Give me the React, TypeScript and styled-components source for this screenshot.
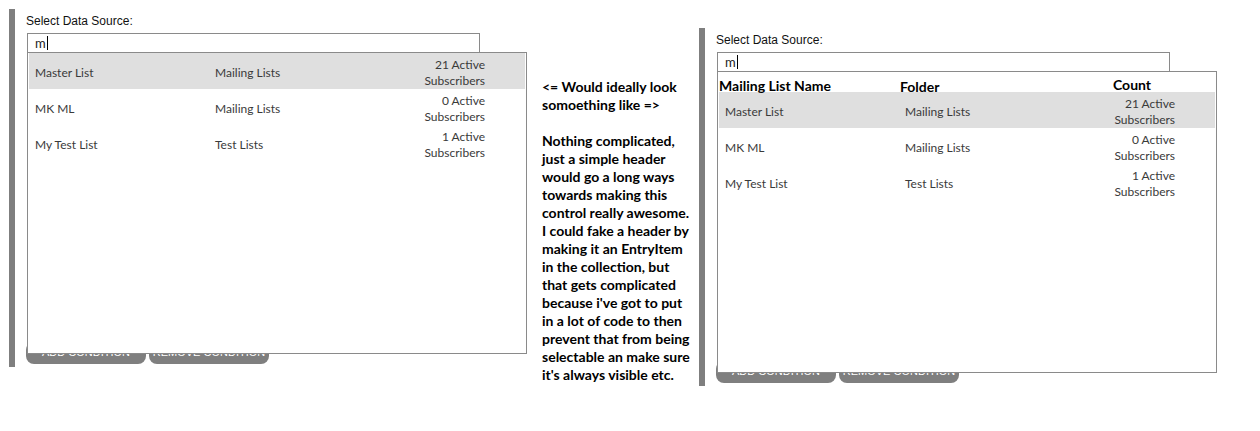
import React from "react";
import styled, { createGlobalStyle } from "styled-components";

const GlobalStyle = createGlobalStyle`
  html, body {
    margin: 0;
    padding: 0;
    background: #fff;
  }
  body {
    font-family: "Liberation Sans", Arial, sans-serif;
  }
`;

type ListItem = {
  name: string;
  folder: string;
  count: number;
};

const items: ListItem[] = [
  { name: "Master List", folder: "Mailing Lists", count: 21 },
  { name: "MK ML", folder: "Mailing Lists", count: 0 },
  { name: "My Test List", folder: "Test Lists", count: 1 },
];

const noteLines = [
  "<= Would ideally look",
  "somoething like =>",
  "",
  "Nothing complicated,",
  "just a simple header",
  "would go a long ways",
  "towards making this",
  "control really awesome.",
  "I could fake a header by",
  "making it an EntryItem",
  "in the collection, but",
  "that gets complicated",
  "because i've got to put",
  "in a lot of code to then",
  "prevent that from being",
  "selectable an make sure",
  "it's always visible etc.",
];

const Page = styled.div`
  display: flex;
  align-items: flex-start;
  padding: 9px 0 0 9px;
`;

const Panel = styled.div<{ $top: number }>`
  box-sizing: border-box;
  display: flex;
  flex-direction: column;
  width: 533px;
  height: 358px;
  margin-top: ${({ $top }) => $top}px;
  padding: 5px 0 3px 12px;
  border-left: 6px solid #7f7f7f;
`;

const Label = styled.div`
  margin-left: -1px;
  font-family: "Liberation Sans", Arial, sans-serif;
  font-size: 12px;
  line-height: 14px;
  color: #111;
`;

const Field = styled.div`
  position: relative;
  margin-top: 5px;
  width: 453px;
  z-index: 2;
`;

const SearchInput = styled.div`
  box-sizing: border-box;
  display: flex;
  align-items: center;
  height: 20px;
  padding-left: 7px;
  border: 1px solid #8a8a8a;
  background: #fff;
  font-family: Lato, "Noto Sans", sans-serif;
  font-size: 13px;
  color: #222;
`;

const Caret = styled.span`
  display: inline-block;
  width: 1px;
  height: 14px;
  margin-left: 1px;
  background: #000;
`;

const Dropdown = styled.div`
  position: absolute;
  top: 19px;
  left: 0;
  box-sizing: border-box;
  width: 500px;
  height: 302px;
  padding: 0 1px;
  border: 1px solid #8a8a8a;
  background: #fff;
`;

const HeaderRow = styled.div`
  display: grid;
  grid-template-columns: 181px 213px auto;
  height: 20px;
  align-items: center;
  font-family: Lato, "Noto Sans", sans-serif;
  font-weight: 700;
  font-size: 14px;
  color: #000;
`;

const HeaderCell = styled.div<{ $dy?: number }>`
  position: relative;
  top: ${({ $dy = 0 }) => $dy}px;
`;

const Row = styled.div<{ $active?: boolean }>`
  box-sizing: border-box;
  display: grid;
  grid-template-columns: 186px 180px 90px;
  align-items: center;
  height: 36px;
  padding-top: 4px;
  background: ${({ $active }) => ($active ? "#dfdfdf" : "transparent")};
  font-family: Lato, "Noto Sans", sans-serif;
  font-size: 12px;
  line-height: 16px;
  color: #3a3a3a;
`;

const NameCell = styled.div`
  padding-left: 6px;
`;

const CountCell = styled.div`
  text-align: right;
`;

const Buttons = styled.div`
  display: flex;
  gap: 3px;
  margin-top: auto;
  margin-left: -1px;
`;

const Button = styled.div`
  box-sizing: border-box;
  width: 120px;
  height: 22px;
  border-radius: 8px;
  background: #7f7f7f;
  color: #fff;
  font-family: "Liberation Sans", Arial, sans-serif;
  font-size: 11px;
  line-height: 20px;
  text-align: center;
  text-transform: uppercase;
`;

const Note = styled.div`
  width: 157px;
  margin-top: 69px;
  font-family: Lato, "Open Sans", sans-serif;
  font-weight: 700;
  font-size: 14px;
  line-height: 18px;
  color: #000;
  white-space: nowrap;
`;

const NoteLine = styled.div`
  min-height: 18px;
`;

const ListRows = () => (
  <>
    {items.map((item, i) => (
      <Row key={item.name} $active={i === 0}>
        <NameCell>{item.name}</NameCell>
        <div>{item.folder}</div>
        <CountCell>
          {item.count} Active
          <br />
          Subscribers
        </CountCell>
      </Row>
    ))}
  </>
);

const DataSourcePicker: React.FC<{ top: number; withHeader?: boolean }> = ({
  top,
  withHeader,
}) => (
  <Panel $top={top}>
    <Label>Select Data Source:</Label>
    <Field>
      <SearchInput>
        m<Caret />
      </SearchInput>
      <Dropdown>
        {withHeader && (
          <HeaderRow>
            <HeaderCell $dy={3}>Mailing List Name</HeaderCell>
            <HeaderCell $dy={4}>Folder</HeaderCell>
            <HeaderCell $dy={2}>Count</HeaderCell>
          </HeaderRow>
        )}
        <ListRows />
      </Dropdown>
    </Field>
    <Buttons>
      <Button>Add Condition</Button>
      <Button>Remove Condition</Button>
    </Buttons>
  </Panel>
);

const App = () => (
  <>
    <GlobalStyle />
    <Page>
      <DataSourcePicker top={0} />
      <Note>
        {noteLines.map((line, i) => (
          <NoteLine key={i}>{line}</NoteLine>
        ))}
      </Note>
      <DataSourcePicker top={19} withHeader />
    </Page>
  </>
);

export default App;
